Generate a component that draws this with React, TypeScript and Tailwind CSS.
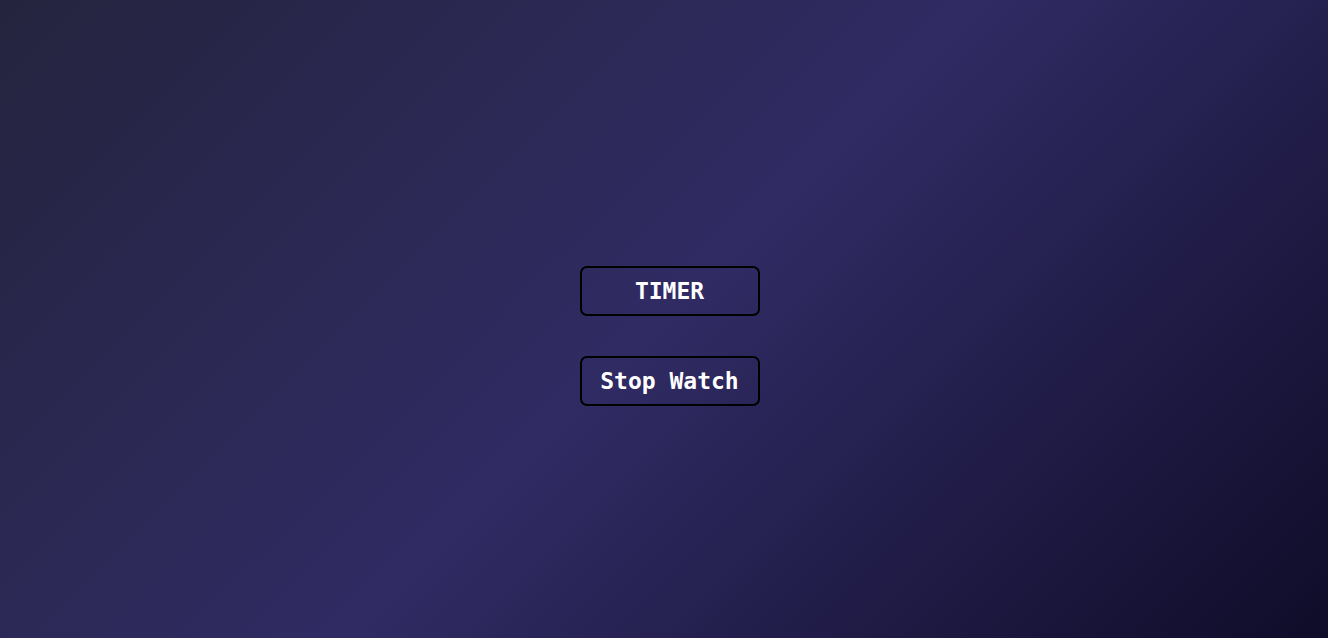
export default function App() {
  return (
    <div className="flex h-[638px] w-full flex-col items-center justify-center gap-[40px] bg-[linear-gradient(135deg,#24243e,#302b63,#0f0c29)] pl-[11px] pt-[33px]">
      {["TIMER", "Stop Watch"].map((label) => (
        <button
          key={label}
          className="flex h-[50px] w-[180px] items-center justify-center rounded-[7px] border-2 border-black bg-transparent pt-[2px] text-[23px] font-bold text-white"
          style={{ fontFamily: "'DejaVu Sans Mono', monospace" }}
        >
          {label}
        </button>
      ))}
    </div>
  );
}
